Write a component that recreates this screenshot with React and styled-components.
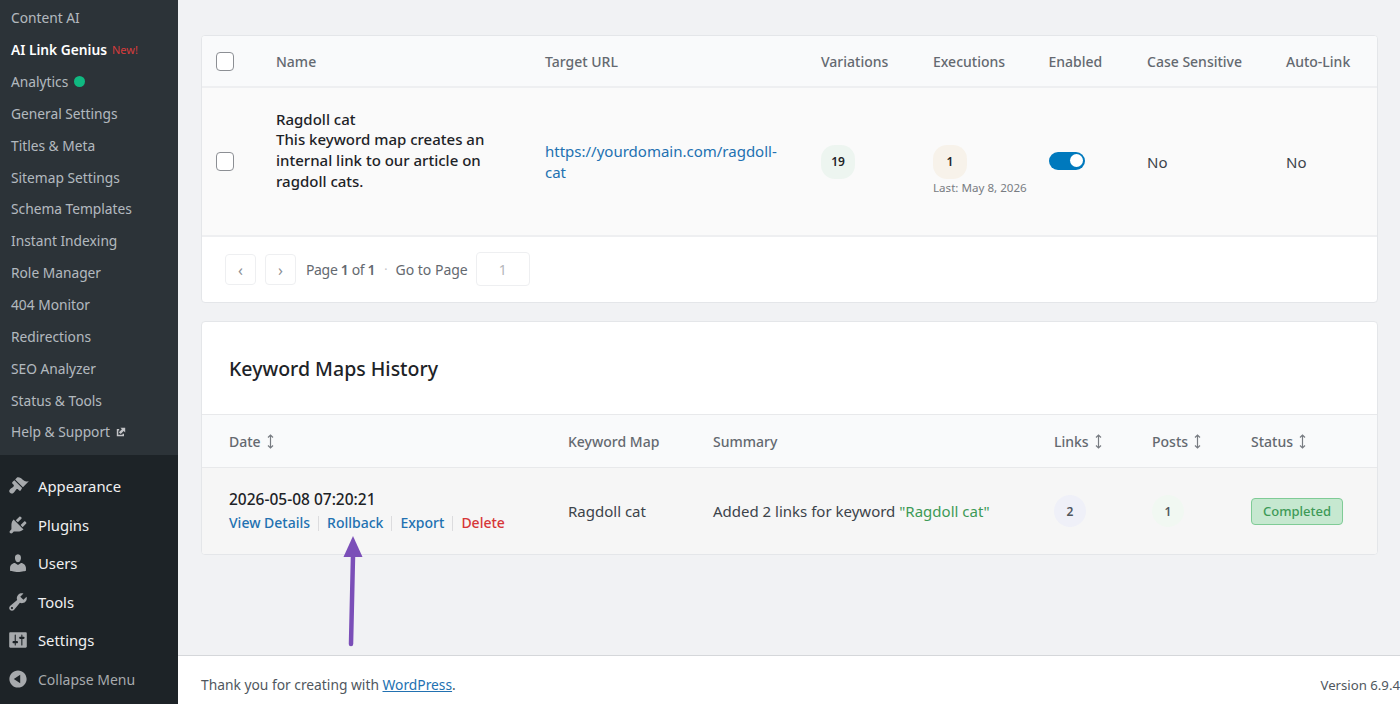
import React from "react";
import styled, { createGlobalStyle } from "styled-components";

const GlobalStyle = createGlobalStyle`
  html, body { margin: 0; padding: 0; height: 100%; overflow: hidden; }
  body {
    background: #f1f2f4;
    color: #3c434a;
    font-family: "Noto Sans", "Open Sans", "Liberation Sans", sans-serif;
    font-size: 14px;
  }
  * { box-sizing: border-box; }
`;

const submenu = [
  "Content AI",
  "AI Link Genius",
  "Analytics",
  "General Settings",
  "Titles & Meta",
  "Sitemap Settings",
  "Schema Templates",
  "Instant Indexing",
  "Role Manager",
  "404 Monitor",
  "Redirections",
  "SEO Analyzer",
  "Status & Tools",
  "Help & Support",
];

const menuIcons = {
  Appearance: (
    <>
      <path d="M14.48 11.06L7.41 3.99l1.5-1.5c.5-.56 2.3-.47 3.51.32 1.21.8 1.43 1.28 2.91 2.1 1.18.64 2.45 1.26 4.45.85z" />
      <path d="M13.77 11.77L6.7 4.7 4.93 6.47c-.39.39-.39 1.02 0 1.41l1.06 1.06c.39.39.39 1.03 0 1.42-.6.6-1.43 1.11-2.21 1.69-.35.26-.7.53-1.01.84-1.43 1.43-.51 2.75 0 3.26.51.51 1.83 1.43 3.26 0 .31-.31.58-.66.84-1.01.58-.78 1.09-1.61 1.69-2.21.39-.39 1.03-.39 1.42 0l1.06 1.06c.39.39 1.02.39 1.41 0z" />
    </>
  ),
  Plugins: (
    <path d="M13.11 4.36L9.87 7.6 8 5.73l3.24-3.24c.35-.34 1.05-.2 1.56.32.52.51.66 1.21.31 1.55zm-8 1.77l.91-1.12 9.01 9.01-1.19.84c-.71.71-2.63 1.16-3.82 1.16H6.14L4.9 17.26c-.59.59-1.54.59-2.12 0-.59-.58-.59-1.53 0-2.12l1.24-1.24v-3.88c0-1.13.4-3.19 1.09-3.89zm7.26 3.97l3.24-3.24c.34-.35 1.04-.21 1.55.31.52.51.66 1.21.31 1.55l-3.24 3.25z" />
  ),
  Users: (
    <path d="M10 9.25c-2.27 0-2.73-3.44-2.73-3.44C7 4.02 7.82 2 9.97 2c2.16 0 2.98 2.02 2.71 3.81 0 0-.41 3.44-2.68 3.44zm0 2.57L12.72 10c2.39 0 4.52 2.33 4.52 4.53v2.49s-3.65 1.13-7.24 1.13c-3.65 0-7.24-1.13-7.24-1.13v-2.49c0-2.25 1.94-4.48 4.47-4.48z" />
  ),
  Tools: (
    <path d="M16.68 9.77c-1.34 1.34-3.3 1.67-4.95.99l-5.41 6.52c-.99.99-2.59.99-3.58 0s-.99-2.59 0-3.57l6.52-5.42c-.68-1.65-.35-3.61.99-4.95 1.28-1.28 3.12-1.62 4.72-1.06l-2.89 2.89 2.82 2.82 2.86-2.87c.53 1.58.18 3.39-1.08 4.65zM3.81 16.21c.4.39 1.04.39 1.43 0 .4-.4.4-1.04 0-1.43-.39-.4-1.03-.4-1.43 0-.39.39-.39 1.03 0 1.43z" />
  ),
  Settings: (
    <path d="M18 16V4c0-.55-.45-1-1-1H3c-.55 0-1 .45-1 1v12c0 .55.45 1 1 1h14c.55 0 1-.45 1-1zM8 11h1c.55 0 1 .45 1 1s-.45 1-1 1H8v1.5c0 .28-.22.5-.5.5s-.5-.22-.5-.5V13H6c-.55 0-1-.45-1-1s.45-1 1-1h1V5.5c0-.28.22-.5.5-.5s.5.22.5.5V11zm5-2h-1c-.55 0-1-.45-1-1s.45-1 1-1h1V5.5c0-.28.22-.5.5-.5s.5.22.5.5V7h1c.55 0 1 .45 1 1s-.45 1-1 1h-1v5.5c0 .28-.22.5-.5.5s-.5-.22-.5-.5V9z" />
  ),
};

const Layout = styled.div`
  display: flex;
  width: 1400px;
  height: 704px;
  overflow: hidden;
`;

const Sidebar = styled.aside`
  width: 178px;
  flex: none;
  display: flex;
  flex-direction: column;
  background: #1d2327;
`;

const SubMenu = styled.ul`
  list-style: none;
  margin: 0;
  padding: 2px 0 7px;
  background: #2c3338;
`;

const SubItem = styled.li`
  height: 31.85px;
  display: flex;
  align-items: center;
  gap: 5px;
  padding-left: 11px;
  font-size: 13.75px;
  color: ${(p) => (p.$active ? "#ffffff" : "rgba(240, 246, 252, 0.7)")};
  font-weight: ${(p) => (p.$active ? 600 : 400)};
  white-space: nowrap;
`;

const NewTag = styled.span`
  color: #d63c3c;
  font-size: 11px;
  font-weight: 400;
`;

const StatusDot = styled.span`
  width: 11px;
  height: 11px;
  border-radius: 50%;
  background: #10b981;
  margin-left: 1px;
`;

const MainMenu = styled.ul`
  list-style: none;
  margin: 0;
  padding: 12px 0 0;
`;

const MenuItem = styled.li`
  height: 38.6px;
  display: flex;
  align-items: center;
  gap: 9px;
  padding-left: 7px;
  font-size: ${(p) => (p.$muted ? "14px" : "14.8px")};
  color: ${(p) => (p.$muted ? "#a7aaad" : "#f0f0f1")};
  svg {
    width: 22px;
    height: 22px;
    fill: #a7aaad;
    flex: none;
  }
`;

const Main = styled.main`
  flex: 1;
  min-width: 0;
  display: flex;
  flex-direction: column;
`;

const Content = styled.div`
  flex: 1;
  position: relative;
  padding: 35px 22px 0 23px;
  display: flex;
  flex-direction: column;
  gap: 18px;
`;

const Card = styled.section`
  background: #ffffff;
  border: 1px solid #e4e6e9;
  border-radius: 4px;
  overflow: hidden;
`;

const MapGrid = styled.div`
  display: grid;
  grid-template-columns: 74px 269px 276px 112px 115.5px 98.5px 139px 1fr;
  align-items: center;
`;

const HistoryGrid = styled.div`
  display: grid;
  grid-template-columns: 339px 145px 341px 98px 99px 1fr;
  padding-left: 27px;
  align-items: center;
`;

const MapHead = styled(MapGrid)`
  height: 52px;
  background: #f9fafb;
  border-bottom: 2px solid #eeeff1;
  color: #646970;
  font-size: 14px;
  font-weight: 500;
`;

const MapRow = styled(MapGrid)`
  height: 149px;
  background: #fafafa;
  border-bottom: 2px solid #eeeff1;
  color: #3c434a;
`;

const HistoryHead = styled(HistoryGrid)`
  height: 54px;
  background: #f9fafb;
  border-bottom: 1px solid #e8e9eb;
  border-top: 1px solid #e8e9eb;
  color: #646970;
  font-size: 14px;
  font-weight: 500;
`;

const HistoryRow = styled(HistoryGrid)`
  height: 86px;
  background: #f6f6f6;
  color: #3c434a;
  font-size: 15px;
`;

const CheckCell = styled.div`
  padding-left: 14px;
  display: flex;
`;

const Checkbox = styled.span`
  width: 18px;
  height: 19px;
  background: #ffffff;
  border: 1px solid #8c8f94;
  border-radius: 4px;
`;

const NameCell = styled.div`
  color: #1d2327;
  font-size: 15px;
  font-weight: 500;
  line-height: 20.7px;
  max-width: 225px;
  padding-bottom: 23px;
`;

const UrlLink = styled.a`
  display: block;
  color: #2271b1;
  font-size: 15px;
  line-height: 20.7px;
  width: 240px;
  overflow-wrap: break-word;
`;

const Pill = styled.span`
  display: inline-flex;
  align-items: center;
  justify-content: center;
  width: ${(p) => p.$size || 34}px;
  height: ${(p) => p.$size || 34}px;
  border-radius: ${(p) => p.$radius || 14}px;
  background: ${(p) => p.$bg};
  color: ${(p) => p.$color || "#1d2327"};
  font-size: 12px;
  font-weight: 600;
`;

const ExecCell = styled.div`
  display: flex;
  flex-direction: column;
  align-items: flex-start;
  gap: 1px;
  margin-top: 16px;
`;

const LastRun = styled.span`
  color: #787c82;
  font-size: 11.6px;
`;

const Toggle = styled.span`
  display: flex;
  align-items: center;
  justify-content: flex-end;
  width: 36px;
  height: 18px;
  padding-right: 2px;
  margin-bottom: 2px;
  border-radius: 9px;
  background: #0079bd;
  &::after {
    content: "";
    width: 13px;
    height: 13px;
    border-radius: 50%;
    background: #ffffff;
  }
`;

const PlainCell = styled.div`
  font-size: 15px;
  color: #3c434a;
`;

const Pagination = styled.div`
  height: 65px;
  padding: 0 23px 1px;
  display: flex;
  align-items: center;
  gap: 9px;
  color: #646970;
  font-size: 14px;
`;

const PageButton = styled.span`
  width: 31px;
  height: 31px;
  display: flex;
  align-items: center;
  justify-content: center;
  border: 1px solid #eeeff1;
  border-radius: 4px;
  color: #8c8f94;
  font-size: 16px;
  padding-top: 2px;
`;

const PageText = styled.span`
  letter-spacing: -0.35px;
  margin-left: 1px;
  b {
    font-weight: 600;
  }
`;

const Dot = styled.span`
  color: #c3c4c7;
  font-size: 12px;
  margin-right: -1px;
`;

const PageInput = styled.span`
  width: 54px;
  height: 34px;
  margin-left: -1px;
  display: flex;
  align-items: center;
  justify-content: center;
  border: 1px solid #eeeff1;
  border-radius: 4px;
  color: #b4b7ba;
  font-size: 14px;
`;

const HistoryTitle = styled.h2`
  margin: 0;
  height: 92px;
  display: flex;
  align-items: center;
  padding-left: 27px;
  color: #1d2327;
  font-size: 19.5px;
  font-weight: 500;
`;

const SortLabel = styled.span`
  display: inline-flex;
  align-items: center;
  gap: 5px;
  svg {
    width: 9px;
    height: 15px;
    stroke: #787c82;
    fill: none;
    stroke-width: 1.2;
  }
`;

const DateCell = styled.div`
  display: flex;
  flex-direction: column;
  gap: 4px;
`;

const DateText = styled.span`
  color: #1d2327;
  font-size: 15.5px;
  line-height: 20px;
  font-weight: 500;
`;

const Actions = styled.div`
  display: flex;
  align-items: center;
  font-size: 14px;
  line-height: 20px;
`;

const Action = styled.a`
  color: ${(p) => (p.$danger ? "#d63638" : "#2271b1")};
  font-weight: 500;
`;

const Sep = styled.span`
  width: 1px;
  height: 15px;
  margin: 0 8px;
  background: #dcdcde;
`;

const Keyword = styled.span`
  color: #3d9a57;
`;

const Badge = styled.span`
  display: inline-flex;
  align-items: center;
  justify-content: center;
  width: 92px;
  height: 27px;
  border: 1px solid #7fcb96;
  border-radius: 4px;
  background: #c6e8d0;
  color: #3d9a57;
  font-size: 13px;
  font-weight: 500;
`;

const Arrow = styled.svg`
  position: absolute;
  left: 163px;
  top: 532px;
  width: 24px;
  height: 116px;
`;

const Footer = styled.footer`
  height: 49px;
  flex: none;
  background: #ffffff;
  border-top: 1px solid #d5d7da;
  display: flex;
  align-items: center;
  justify-content: space-between;
  padding: 9px 0 0 23px;
  font-size: 13.8px;
  color: #50575e;
  a {
    color: #2271b1;
    text-decoration: underline;
  }
`;

const Version = styled.span`
  font-size: 13.2px;
`;

const SortIcon = () => (
  <svg viewBox="0 0 9 15">
    <path d="M4.5 1v13M2 3.5 4.5 1 7 3.5M2 11.5 4.5 14 7 11.5" />
  </svg>
);

export default function App() {
  return (
    <Layout>
      <GlobalStyle />
      <Sidebar>
        <SubMenu>
          {submenu.map((item) => (
            <SubItem key={item} $active={item === "AI Link Genius"}>
              {item}
              {item === "AI Link Genius" && <NewTag>New!</NewTag>}
              {item === "Analytics" && <StatusDot />}
              {item === "Help & Support" && (
                <svg width="12" height="12" viewBox="0 0 20 20" fill="#c3c4c7">
                  <path d="M9 3h8v8l-2.5-2.5-5 5-3-3 5-5zM3 5h4v2.5H5.5v7h7V13H15v4H3z" />
                </svg>
              )}
            </SubItem>
          ))}
        </SubMenu>
        <MainMenu>
          {Object.keys(menuIcons).map((name) => (
            <MenuItem key={name}>
              <svg viewBox="0 0 20 20">{menuIcons[name]}</svg>
              {name}
            </MenuItem>
          ))}
          <MenuItem $muted>
            <svg viewBox="0 0 20 20">
              <path d="M10 2.16c4.33 0 7.84 3.51 7.84 7.84s-3.51 7.84-7.84 7.84S2.16 14.33 2.16 10 5.71 2.16 10 2.16zm2 11.72V6.12L6.18 9.97z" />
            </svg>
            Collapse Menu
          </MenuItem>
        </MainMenu>
      </Sidebar>

      <Main>
        <Content>
          <Card>
            <MapHead>
              <CheckCell>
                <Checkbox />
              </CheckCell>
              <span>Name</span>
              <span>Target URL</span>
              <span>Variations</span>
              <span>Executions</span>
              <span>Enabled</span>
              <span>Case Sensitive</span>
              <span>Auto-Link</span>
            </MapHead>
            <MapRow>
              <CheckCell>
                <Checkbox />
              </CheckCell>
              <NameCell>
                Ragdoll cat
                <br />
                This keyword map creates an internal link to our article on ragdoll cats.
              </NameCell>
              <UrlLink>https://yourdomain.com/ragdoll-cat</UrlLink>
              <div>
                <Pill $bg="#edf5f0">19</Pill>
              </div>
              <ExecCell>
                <Pill $bg="#f7f2ea">1</Pill>
                <LastRun>Last: May 8, 2026</LastRun>
              </ExecCell>
              <div>
                <Toggle />
              </div>
              <PlainCell>No</PlainCell>
              <PlainCell>No</PlainCell>
            </MapRow>
            <Pagination>
              <PageButton>‹</PageButton>
              <PageButton>›</PageButton>
              <PageText>
                Page <b>1</b> of <b>1</b>
              </PageText>
              <Dot>·</Dot>
              <span>Go to Page</span>
              <PageInput>1</PageInput>
            </Pagination>
          </Card>

          <Card>
            <HistoryTitle>Keyword Maps History</HistoryTitle>
            <HistoryHead>
              <SortLabel>
                Date <SortIcon />
              </SortLabel>
              <span>Keyword Map</span>
              <span>Summary</span>
              <SortLabel>
                Links <SortIcon />
              </SortLabel>
              <SortLabel>
                Posts <SortIcon />
              </SortLabel>
              <SortLabel>
                Status <SortIcon />
              </SortLabel>
            </HistoryHead>
            <HistoryRow>
              <DateCell>
                <DateText>2026-05-08 07:20:21</DateText>
                <Actions>
                  <Action>View Details</Action>
                  <Sep />
                  <Action>Rollback</Action>
                  <Sep />
                  <Action>Export</Action>
                  <Sep />
                  <Action $danger>Delete</Action>
                </Actions>
              </DateCell>
              <span>Ragdoll cat</span>
              <span>
                Added 2 links for keyword <Keyword>"Ragdoll cat"</Keyword>
              </span>
              <div>
                <Pill $bg="#eff0f8" $radius={16} $size={32} $color="#50575e">2</Pill>
              </div>
              <div>
                <Pill $bg="#f1f8f2" $radius={16} $size={32} $color="#50575e">1</Pill>
              </div>
              <div>
                <Badge>Completed</Badge>
              </div>
            </HistoryRow>
          </Card>

          <Arrow viewBox="0 0 24 116">
            <path d="M12 24 10 112" stroke="#7b4fb8" strokeWidth="4.5" strokeLinecap="round" fill="none" />
            <path d="M12 4 21.5 25 2.5 25z" fill="#7b4fb8" />
          </Arrow>
        </Content>
        <Footer>
          <span>
            Thank you for creating with <a>WordPress</a>.
          </span>
          <Version>Version 6.9.4</Version>
        </Footer>
      </Main>
    </Layout>
  );
}
